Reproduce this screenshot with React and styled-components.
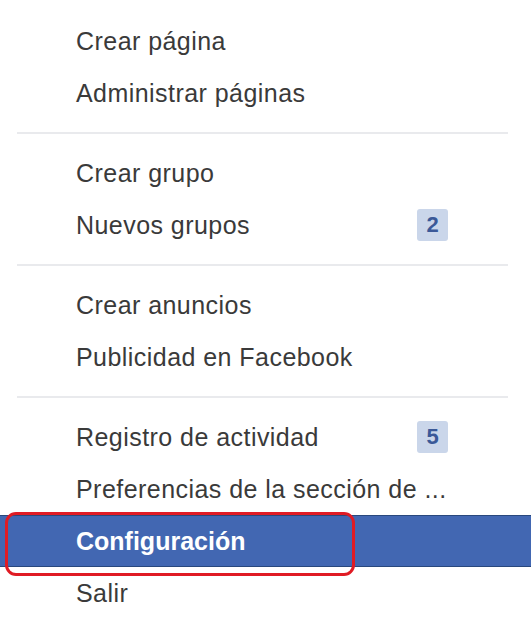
import React from "react";
import styled, { createGlobalStyle } from "styled-components";

const GlobalStyle = createGlobalStyle`
  html, body {
    margin: 0;
    padding: 0;
    background: #fff;
  }
  body {
    font-family: "Liberation Sans", Arial, sans-serif;
  }
`;

const sections = [
  [{ label: "Crear página" }, { label: "Administrar páginas" }],
  [{ label: "Crear grupo" }, { label: "Nuevos grupos", badge: 2 }],
  [{ label: "Crear anuncios" }, { label: "Publicidad en Facebook" }],
  [
    { label: "Registro de actividad", badge: 5 },
    { label: "Preferencias de la sección de ..." },
    { label: "Configuración", active: true, marked: true },
    { label: "Salir" },
  ],
];

function App() {
  return (
    <>
      <GlobalStyle />
      <Menu>
        {sections.map((items, i) => (
          <React.Fragment key={i}>
            {i > 0 && <Divider />}
            <Section>
              {items.map((item) => (
                <Item key={item.label} $active={item.active}>
                  <Label $active={item.active}>{item.label}</Label>
                  {item.badge && <Badge>{item.badge}</Badge>}
                  {item.marked && <Highlight />}
                </Item>
              ))}
            </Section>
          </React.Fragment>
        ))}
      </Menu>
    </>
  );
}

const Menu = styled.div`
  width: 531px;
  height: 618px;
  padding-top: 15px;
  box-sizing: border-box;
  overflow: hidden;
  background: #fff;
`;

const Section = styled.div`
  display: flex;
  flex-direction: column;
`;

const Divider = styled.div`
  height: 2px;
  margin: 13px 23px 13px 17px;
  background: #e9eaed;
`;

const Item = styled.div`
  position: relative;
  display: flex;
  align-items: center;
  height: 52px;
  padding: 0 83px 0 76px;
  box-sizing: border-box;
  background: ${(p) => (p.$active ? "#4267b2" : "transparent")};
  border-top: ${(p) => (p.$active ? "1px solid #29487d" : "none")};
  border-bottom: ${(p) => (p.$active ? "1px solid #29487d" : "none")};
`;

const Label = styled.span`
  flex: 1;
  font-size: 25px;
  letter-spacing: ${(p) => (p.$active ? "0" : "0.45px")};
  color: ${(p) => (p.$active ? "#fff" : "#3a3a3a")};
  font-weight: ${(p) => (p.$active ? "bold" : "normal")};
  white-space: nowrap;
`;

const Badge = styled.span`
  display: inline-flex;
  align-items: center;
  justify-content: center;
  width: 31px;
  height: 32px;
  border-radius: 3px;
  background: #cad6ea;
  color: #3b5998;
  font-weight: bold;
  font-size: 22px;
`;

const Highlight = styled.div`
  position: absolute;
  left: 5px;
  top: -4px;
  width: 350px;
  height: 64px;
  border: 3px solid #e01b24;
  border-radius: 11px;
  box-sizing: border-box;
  pointer-events: none;
`;

export default App;
